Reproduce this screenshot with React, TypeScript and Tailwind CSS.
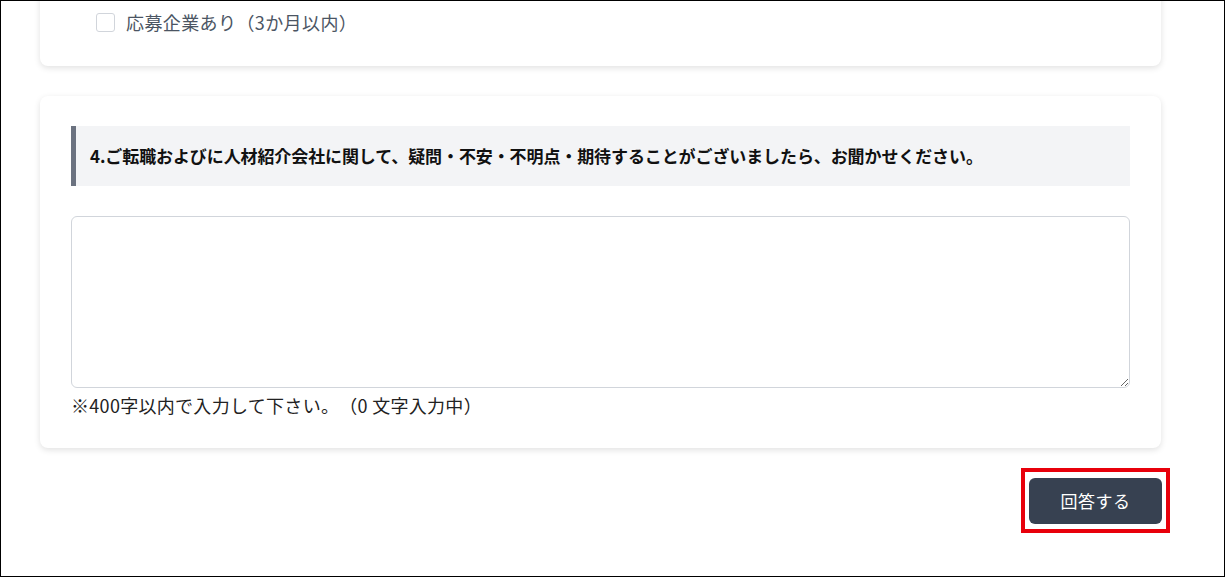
import React from "react";

export default function App() {
  return (
    <div
      lang="ja"
      className="w-[1225px] h-[577px] box-border border border-black bg-white overflow-hidden [text-spacing-trim:space-all]"
      style={{ fontFamily: '"Noto Sans CJK JP", "Noto Sans", sans-serif' }}
    >
      <div className="ml-[39px] w-[1121px] flex flex-col">
        {/* Card 1 (scrolled, top hidden) */}
        <div className="-mt-[21px] h-[86px] bg-white rounded-lg shadow-[0_2px_6px_rgba(0,0,0,0.12)] pl-[56px] pt-[32px]">
          <label className="flex items-center gap-[11px]">
            <span className="w-[19px] h-[19px] rounded-[3px] border border-[#d1d5db] bg-white" />
            <span className="text-[18px] leading-[20px] tracking-[0.4px] text-[#4b5563]">応募企業あり（3か月以内）</span>
          </label>
        </div>

        {/* Card 2 */}
        <div className="mt-[30px] bg-white rounded-lg shadow-[0_2px_6px_rgba(0,0,0,0.12)] px-[31px] pt-[30px] pb-[30px]">
          <div className="h-[60px] bg-[#f3f4f6] border-l-[5px] border-[#6b7280] flex items-center pl-[14px]">
            <h2 className="text-[17px] font-bold text-[#111111] tracking-[-0.1px]">
              4.ご転職およびに人材紹介会社に関して、疑問・不安・不明点・期待することがございましたら、お聞かせください。
            </h2>
          </div>
          <textarea className="mt-[30px] block w-full h-[172px] border border-[#d1d5db] rounded-md bg-white resize-y" />
          <p className="mt-[4px] text-[18px] leading-[26px] tracking-[0.3px] text-[#222222]">
            ※400字以内で入力して下さい。（0 文字入力中）
          </p>
        </div>

        {/* Button row */}
        <div className="mt-[30px] flex justify-end">
          <div className="relative mr-[-1px]">
            <button className="w-[133px] h-[46px] bg-[#374151] rounded-md text-white text-[17px] tracking-[0.5px]">
              回答する
            </button>
            <span className="absolute -left-[8px] -right-[8px] -top-[10px] -bottom-[9px] border-[4px] border-[#e8000b] pointer-events-none" />
          </div>
        </div>
      </div>
    </div>
  );
}
